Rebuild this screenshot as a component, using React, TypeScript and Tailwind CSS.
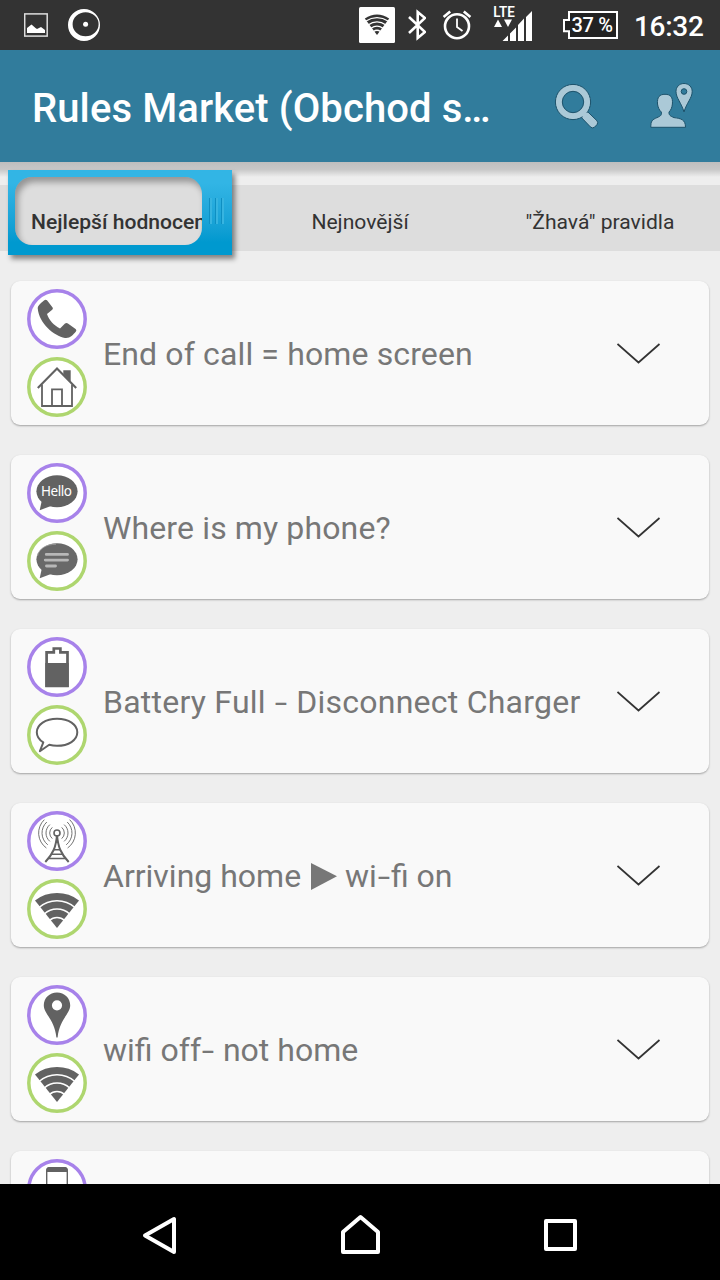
import type { ReactNode } from "react";

type IconName =
  | "call"
  | "house"
  | "hello"
  | "message"
  | "battery"
  | "bubble"
  | "tower"
  | "wifi"
  | "pin"
  | "device";

type Rule = {
  title: ReactNode;
  trigger: IconName;
  action: IconName;
};

const Hyphen = () => <span className="inline-block w-[14px] text-center scale-x-140">-</span>;

const rules: Rule[] = [
  {
    title: <span className="tracking-[0.13px]">End of call = home screen</span>,
    trigger: "call",
    action: "house",
  },
  {
    title: <span className="tracking-[0.13px]">Where is my phone?</span>,
    trigger: "hello",
    action: "message",
  },
  {
    title: (
      <span className="tracking-[0.24px]">
        Battery Full <Hyphen /> Disconnect Charger
      </span>
    ),
    trigger: "battery",
    action: "bubble",
  },
  {
    title: (
      <>
        Arriving home{" "}
        <svg className="inline-block w-[26px] h-[28px] align-[-3px] ml-[2px] mr-[8px]" viewBox="0 0 26 28">
          <path d="M0 1 L26 14.3 L0 28Z" fill="#777" />
        </svg>
        wi
        <Hyphen />
        fi on
      </>
    ),
    trigger: "tower",
    action: "wifi",
  },
  {
    title: (
      <>
        wifi off
        <Hyphen /> not home
      </>
    ),
    trigger: "pin",
    action: "wifi",
  },
  { title: "", trigger: "device", action: "bubble" },
];

const WifiShape = () => (
  <>
    <path d="M30 49 L8 21.6 A35.2 35.2 0 0 1 52 21.6Z" fill="#626262" />
    <g fill="none" stroke="#fff" strokeWidth="1.4">
      <path d="M12 28.5 A27.3 27.3 0 0 1 48 28.5" />
      <path d="M17.3 34.9 A19 19 0 0 1 42.7 34.9" />
      <path d="M22.5 41.6 A10.6 10.6 0 0 1 37.5 41.6" />
    </g>
  </>
);

const icons: Record<IconName, ReactNode> = {
  call: (
    <path
      d="M17 11.6 Q18.8 10 20.2 11.6 L25.6 18.4 Q26.4 19.7 25.2 20.8 L20 25 C22 31 27 36.5 33 39.6 L38 34.6 Q39.4 33.4 40.9 34.4 L48.6 40 Q50 41.2 48.9 42.6 C46 46 43 49.6 38 49 C27 46.5 12 35 10.7 19 Q10.7 16.5 17 11.6Z"
      fill="#626262"
    />
  ),
  house: (
    <g fill="none" stroke="#626262" strokeWidth="1.8">
      <path d="M36.3 13.3h7.4v11.2l-7.4-7.4Z" fill="#626262" stroke="none" />
      <path d="M10.8 31 L30 11.4 L49.2 31" strokeWidth="2.1" />
      <path d="M15 27.5V49h30V27.5M25 49V32.3h10V49" />
    </g>
  ),
  hello: (
    <>
      <path d="M14.8 37.5 L12.7 47.2 L24 43Z" fill="#626262" />
      <ellipse cx="30" cy="28.3" rx="20.6" ry="16" fill="#626262" />
      <text x="14" y="33" fontSize="13.5" textLength="31" fill="#fff" fontFamily="Noto Sans, sans-serif">
        Hello
      </text>
    </>
  ),
  message: (
    <>
      <path d="M14.8 37.5 L12.7 47.2 L24 43Z" fill="#696969" />
      <ellipse cx="30" cy="28.3" rx="20.6" ry="16" fill="#696969" />
      <path d="M10.5 25 C12 17 20 13.2 29 13.3" fill="none" stroke="#aaa" strokeWidth=".7" />
      <path d="M19.3 23.4H40.5M18.3 29.1H40.5M19.5 35H28.5" stroke="#b8b8b8" strokeWidth="2.9" strokeLinecap="round" />
    </>
  ),
  battery: (
    <>
      <path
        d="M19.6 15.4h7.2v-3.9h6.6v3.9h7.1v33.4H19.6Z"
        fill="none"
        stroke="#626262"
        strokeWidth="2.7"
      />
      <path d="M18.3 26h23.4v24H18.3Z" fill="#626262" />
    </>
  ),
  bubble: (
    <path
      d="M16.3 37.4 C12 34.8 9.8 31.2 9.8 27.3 C9.8 19.6 18.6 13.8 30 13.8 C41.8 13.8 50.3 19.6 50.3 27.3 C50.3 35.3 41.5 40.8 30 40.8 Q26 40.8 22.2 39.8 L12.9 46.2Z"
      fill="none"
      stroke="#626262"
      strokeWidth="2"
      strokeLinejoin="round"
    />
  ),
  tower: (
    <g fill="none" stroke="#626262">
      <circle cx="30" cy="22" r="3" strokeWidth="1.6" />
      <path d="M30 24 C29 36 26 43 18.3 51M30 24 C31 36 34 43 41.7 51" strokeWidth="2" />
      <path d="M27 38.8h6M24.8 43.2h10.4M22 47.5h16M30 24v8" strokeWidth="1.5" />
      <g strokeWidth=".9">
        <path d="M25.3 16.4 A7.3 7.3 0 0 0 25.3 27.6M34.7 16.4 A7.3 7.3 0 0 1 34.7 27.6" />
        <path d="M22.9 13.6 A11 11 0 0 0 22.9 30.4M37.1 13.6 A11 11 0 0 1 37.1 30.4" />
        <path d="M19.8 11 A15 15 0 0 0 20.8 33.8M40.2 11 A15 15 0 0 1 39.2 33.8" />
        <path d="M17.3 8.7 A18.4 18.4 0 0 0 19.4 37M42.7 8.7 A18.4 18.4 0 0 1 40.6 37" />
      </g>
    </g>
  ),
  wifi: <WifiShape />,
  pin: (
    <path
      fillRule="evenodd"
      d="M30 7.4 C37.5 7.4 43.2 13 43.2 20.2 C43.2 29 32.5 34 30.6 52.6 H29.4 C27.5 34 16.8 29 16.8 20.2 C16.8 13 22.5 7.4 30 7.4Z M30 15.2 a5.1 5.1 0 1 0 0 10.2 a5.1 5.1 0 1 0 0-10.2Z"
      fill="#626262"
    />
  ),
  device: (
    <>
      <rect x="19.7" y="8.7" width="20.6" height="40" rx="3" fill="none" stroke="#626262" strokeWidth="1.4" />
      <path d="M19.5 13V11q0-3 3-3h15q3 0 3 3v2Z" fill="#626262" />
    </>
  ),
};

function RuleIcon({ name, color }: { name: IconName; color: string }) {
  return (
    <svg className="block w-[60px] h-[60px]" viewBox="0 0 60 60">
      <circle cx="30" cy="30" r="28.2" fill="#fff" stroke={color} strokeWidth="3.5" />
      {icons[name]}
    </svg>
  );
}

function RuleCard({ rule }: { rule: Rule }) {
  return (
    <div className="h-[144px] shrink-0 flex items-center rounded-[9px] bg-[#f9f9f9] pl-4 pr-[48px] shadow-[0_1px_2px_rgba(0,0,0,0.32)]">
      <div className="flex flex-col gap-2">
        <RuleIcon name={rule.trigger} color="#a782ea" />
        <RuleIcon name={rule.action} color="#aed66f" />
      </div>
      <div className="flex-1 ml-4 mt-[2px] text-[32px] text-[#777] whitespace-nowrap">{rule.title}</div>
      <svg className="w-[44px] h-[22px]" viewBox="0 0 44 22">
        <path d="M0.5 2 L21.5 20.5 L42.5 2" fill="none" stroke="#333" strokeWidth="1.7" />
      </svg>
    </div>
  );
}

function StatusBar() {
  return (
    <div className="h-[50px] shrink-0 bg-[#333] flex items-center text-white">
      <svg className="ml-6 w-6 h-[50px]" viewBox="24 0 24 50">
        <rect x="24.7" y="13.9" width="22.5" height="22.2" fill="none" stroke="#ddd" strokeWidth="1.5" />
        <path d="M27 33v-5l4.5-3.5 4 3.5 1.5 1 4-2 4 3v3Z" fill="#fff" />
      </svg>
      <svg className="ml-5 w-8 h-[50px]" viewBox="68 0 32 50">
        <path
          fillRule="evenodd"
          d="M84 9a16 16 0 1 0 0 32a16 16 0 1 0 0-32ZM85.6 12.2a13 12 0 1 1 0 24a13 12 0 1 1 0-24Z"
          fill="#fff"
        />
        <circle cx="85.6" cy="24.3" r="2.5" fill="#fff" />
      </svg>

      <div className="flex items-center ml-auto pr-[15px]">
        <svg className="w-9 h-[50px]" viewBox="359 0 36 50">
          <rect x="359" y="7" width="36" height="36" rx="1.5" fill="#fff" />
          <path d="M377 35 L364.8 18.5 Q377 10.5 389.2 18.5Z" fill="#333" />
          <g fill="none" stroke="#fff" strokeWidth="1.3">
            <path d="M365.5 21.2 Q377 14 388.5 21.2M368 25 Q377 18.8 386 25M371 28.3 Q377 24 383 28.3M373.5 31.5 Q377 29 380.5 31.5" />
          </g>
        </svg>
        <svg className="ml-[13px] w-[18px] h-[50px]" viewBox="408 0 18 50">
          <path d="M409 17 L425 32 L417.7 38 V12 L425 18 L409 33" fill="none" stroke="#fff" strokeWidth="2.6" />
        </svg>
        <svg className="ml-[16px] w-[30px] h-[50px]" viewBox="442 0 30 50">
          <circle cx="457" cy="26.2" r="12" fill="none" stroke="#fff" strokeWidth="2.6" />
          <path d="M457 18.5V27l5.5 4" fill="none" stroke="#fff" strokeWidth="1.8" />
          <path d="M443.6 17 L450.2 11.5M470.4 17 L463.8 11.5" stroke="#fff" strokeWidth="2.6" />
        </svg>
        <svg className="ml-[21px] w-[40px] h-[50px]" viewBox="493 0 40 50">
          <text x="493.3" y="17" fontSize="14" fontWeight="600" textLength="21.5" lengthAdjust="spacingAndGlyphs" fill="#fff">
            LTE
          </text>
          <path d="M494 27l4-7.5 4 7.5ZM504 19.5h8l-4 7.5Z" fill="#fff" />
          <path
            d="M502.5 41l5.5-5.5V41ZM510 41v-7.5l6-6V41ZM518 41V25l6-6.5V41ZM526 41V17l6-6V41Z"
            fill="#fff"
          />
        </svg>
        <svg className="ml-[29px] w-[57px] h-[50px]" viewBox="562 0 57 50">
          <path d="M569 12h48v26h-48v-6.8h-5V20h5Z" fill="#222" stroke="#fff" strokeWidth="2" />
          <text x="571.5" y="32" fontSize="20" fontWeight="500" textLength="41.5" fill="#fff">
            37 %
          </text>
        </svg>
        <span className="ml-[15px] mt-[4px] w-[71px] text-[28px] tracking-[-0.3px] font-medium whitespace-nowrap">
          16:32
        </span>
      </div>
    </div>
  );
}

function Header() {
  return (
    <header className="relative h-[112px] shrink-0 bg-[#317c9c] flex items-center text-white pl-8">
      <h1 className="w-[478px] mt-[6px] text-[40px] tracking-[0.1px] font-medium whitespace-nowrap">
        Rules Market (Obchod s…
      </h1>
      <svg className="ml-[44px] w-[46px] h-[112px]" viewBox="554 50 46 112">
        <g fill="#abc9d7" stroke="#1c526b" strokeWidth="1">
          <path d="M581.4 117.5 L587.6 111.7 L597 120.8 Q598.4 122.6 597 124.6 L594.4 127.3 Q592.2 128.8 590.3 126.8Z" />
          <path
            fillRule="evenodd"
            d="M573 84.4a17.6 17.6 0 1 0 0 35.2a17.6 17.6 0 1 0 0-35.2ZM573 91.3a10.7 10.7 0 1 1 0 21.4a10.7 10.7 0 1 1 0-21.4Z"
          />
          {/* joins the handle to the ring */}
          <path d="M580.5 114.5 L584.5 110.8 L588.6 114.7 L584.6 118.6Z" stroke="none" />
        </g>
      </svg>
      <svg className="ml-[50px] w-[44px] h-[112px]" viewBox="650 50 44 112">
        <g fill="#abc9d7" stroke="#1c526b" strokeWidth="1">
          <path d="M650.8 127.3 C650.8 121 652 119.8 657 117.6 C661 116 661.8 115 661.3 112 C659 110 658 107 657.5 104 C657 97 659.5 94.3 665 94.3 C670.5 94.3 673 97 672.4 104 C672 107.5 671 110 669 112 C668.8 115 670 116 674 117.6 C681 118.5 685.5 119.5 685.5 127.3Z" />
          <path
            fillRule="evenodd"
            d="M684 83.5 C688.8 83.5 692.2 87 692.2 91.5 C692.2 98 686.5 103 684 112 C681.5 103 676 98 676 91.5 C676 87 679.2 83.5 684 83.5ZM684 88.7a2.8 2.8 0 1 0 0 5.6a2.8 2.8 0 1 0 0-5.6Z"
          />
        </g>
      </svg>
      <div className="absolute top-full left-0 w-full h-[15px] bg-linear-to-b from-[#bebebe] via-[#c8c8c8] to-[#eee]" />
    </header>
  );
}

function Tabs() {
  return (
    <div className="relative mt-[23px] h-[66px] shrink-0 grid grid-cols-3 items-center bg-[#ddd] text-[21.1px] text-[#333] text-center">
      <span />
      <span className="mt-[7px]">Nejnovější</span>
      <span className="mt-[7px]">"Žhavá" pravidla</span>

      {/* slider handle lying over the active tab */}
      <div className="absolute left-2 -top-[15px] w-[224px] h-[85px] flex items-center pl-[7px] bg-linear-to-b from-[#32b5e5] from-15% to-[#0099cf] to-85% shadow-[3px_4px_5px_rgba(0,0,0,0.45)]">
        <div className="w-[187px] h-[68px] -mt-[3px] rounded-[17px] bg-[#ddd] overflow-hidden shadow-[inset_3px_5px_6px_rgba(0,0,0,0.33)] text-left">
          <span className="block pl-4 pt-[29px] font-medium whitespace-nowrap">Nejlepší hodnocení</span>
        </div>
        <div className="ml-[7px] -mt-[4px] flex gap-[3px]">
          <i className="w-[3px] h-[26px] bg-[#37b4e0] border-l border-[#0e8fc2]" />
          <i className="w-[3px] h-[26px] bg-[#37b4e0] border-l border-[#0e8fc2]" />
          <i className="w-[3px] h-[26px] bg-[#37b4e0] border-l border-[#0e8fc2]" />
        </div>
      </div>
    </div>
  );
}

function NavBar() {
  return (
    <nav className="h-24 shrink-0 bg-black flex items-center justify-between pl-[140px] pr-[140px]">
      <svg className="w-10 h-[96px]" viewBox="140 1184 40 96" fill="none" stroke="#fff" strokeWidth="4" strokeLinejoin="round">
        <path d="M145 1235.5 L174 1219 V1252Z" />
      </svg>
      <svg className="w-10 h-[96px]" viewBox="340 1184 40 96" fill="none" stroke="#fff" strokeWidth="4" strokeLinejoin="round">
        <path d="M343 1252V1232L360.5 1217 L378 1232V1252Z" />
      </svg>
      <svg className="w-10 h-[96px]" viewBox="540 1184 40 96" fill="none" stroke="#fff" strokeWidth="4" strokeLinejoin="round">
        <path d="M546 1221h29v28h-29Z" />
      </svg>
    </nav>
  );
}

const App = () => {
  return (
    <div className="w-[720px] h-[1280px] flex flex-col overflow-hidden bg-[#eee] font-[Roboto,sans-serif]">
      <StatusBar />
      <Header />
      <Tabs />
      <main className="flex-1 min-h-0 overflow-hidden flex flex-col gap-[30px] pt-[30px] px-[11px]">
        {rules.map((rule, index) => (
          <RuleCard key={index} rule={rule} />
        ))}
      </main>
      <NavBar />
    </div>
  );
};

export default App;
